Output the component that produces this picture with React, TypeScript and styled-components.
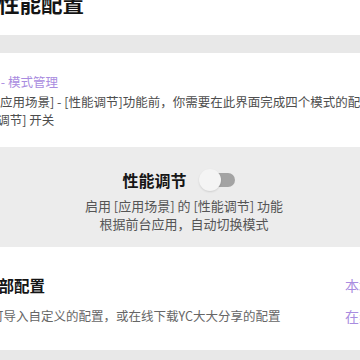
import React from "react";
import styled, { createGlobalStyle } from "styled-components";

const GlobalStyle = createGlobalStyle`
  html, body {
    margin: 0;
    padding: 0;
    background: #ffffff;
    overflow: hidden;
  }
  body {
    font-family: "Noto Sans CJK SC", "Noto Sans", sans-serif;
  }
`;

const Frame = styled.div`
  width: 360px;
  height: 360px;
  overflow: hidden;
  background: #e8e8e8;
`;

const Screen = styled.div`
  width: 434px;
  margin-left: -33px;
  display: flex;
  flex-direction: column;
`;

const Header = styled.header`
  height: 35px;
  background: #ffffff;
  padding-left: 31px;
  box-sizing: border-box;
`;

const PageTitle = styled.h1`
  margin: -8px 0 0;
  font-size: 21.5px;
  line-height: 22px;
  font-weight: 700;
  color: #141414;
  white-space: nowrap;
`;

const Band = styled.div<{ $h: number }>`
  height: ${(p) => p.$h}px;
  background: #e8e8e8;
`;

const IntroSection = styled.section`
  background: #ffffff;
  height: 94px;
  box-sizing: border-box;
  padding: 20px 0 0 1px;
  display: flex;
  flex-direction: column;
  gap: 2px;
`;

const Line = styled.div<{ $indent?: number; $color?: string }>`
  margin-left: ${(p) => p.$indent ?? 0}px;
  font-size: 12.5px;
  line-height: 18px;
  color: ${(p) => p.$color ?? "#4d4d4d"};
  white-space: nowrap;
`;

const Lines = styled.div`
  display: flex;
  flex-direction: column;
`;

const SwitchSection = styled.section`
  background: #ececec;
  height: 100px;
  box-sizing: border-box;
  padding-top: 21px;
  display: flex;
  flex-direction: column;
  align-items: center;
  gap: 5px;
`;

const SwitchRow = styled.div`
  display: flex;
  align-items: center;
  gap: 12px;
  height: 24px;
`;

const SwitchTitle = styled.span`
  font-size: 16px;
  line-height: 24px;
  font-weight: 700;
  color: #161616;
`;

const Switch = styled.div`
  position: relative;
  width: 36px;
  height: 22px;
  margin-right: 11px;
`;

const Track = styled.div`
  position: absolute;
  left: 2px;
  right: 0;
  top: 4px;
  height: 14px;
  border-radius: 7px;
  background: #a3a3a3;
`;

const Knob = styled.div`
  position: absolute;
  left: 0;
  top: 0;
  width: 22px;
  height: 22px;
  border-radius: 50%;
  background: #f4f4f4;
  box-shadow: 0 1px 2px rgba(0, 0, 0, 0.12);
`;

const CenterText = styled.div`
  font-size: 13px;
  line-height: 18px;
  color: #555555;
  text-align: center;
  white-space: nowrap;
`;

const ConfigSection = styled.section`
  background: #ffffff;
  height: 103px;
  box-sizing: border-box;
  padding-top: 27px;
  display: grid;
  grid-template-columns: 1fr 56px;
  grid-template-rows: 22px 18px;
  row-gap: 11px;
  align-items: center;
  align-content: start;
`;

const ConfigTitle = styled.div<{ $indent: number }>`
  margin-left: ${(p) => p.$indent}px;
  font-size: 15.5px;
  line-height: 22px;
  font-weight: 700;
  color: #151515;
  white-space: nowrap;
`;

const ActionLink = styled.div`
  font-size: 14px;
  line-height: 20px;
  color: #a98ce0;
  white-space: nowrap;
`;

export default function App() {
  return (
    <>
      <GlobalStyle />
      <Frame>
        <Screen>
          <Header>
            <PageTitle>性能配置</PageTitle>
          </Header>
          <Band $h={18} />
          <IntroSection>
            <Line $indent={5} $color="#a98ce0">
              配置 - 模式管理
            </Line>
            <Lines>
              <Line>启用 [应用场景] - [性能调节]功能前，你需要在此界面完成四个模式的配置，并打开</Line>
              <Line>[性能调节] 开关</Line>
            </Lines>
          </IntroSection>
          <SwitchSection>
            <SwitchRow>
              <SwitchTitle>性能调节</SwitchTitle>
              <Switch>
                <Track />
                <Knob />
              </Switch>
            </SwitchRow>
            <Lines>
              <CenterText>启用 [应用场景] 的 [性能调节] 功能</CenterText>
              <CenterText>根据前台应用，自动切换模式</CenterText>
            </Lines>
          </SwitchSection>
          <ConfigSection>
            <ConfigTitle $indent={16}>全部配置</ConfigTitle>
            <ActionLink>本地导入</ActionLink>
            <Line $indent={24} $color="#666666">
              可导入自定义的配置，或在线下载YC大大分享的配置
            </Line>
            <ActionLink>在线下载</ActionLink>
          </ConfigSection>
          <Band $h={10} />
        </Screen>
      </Frame>
    </>
  );
}
